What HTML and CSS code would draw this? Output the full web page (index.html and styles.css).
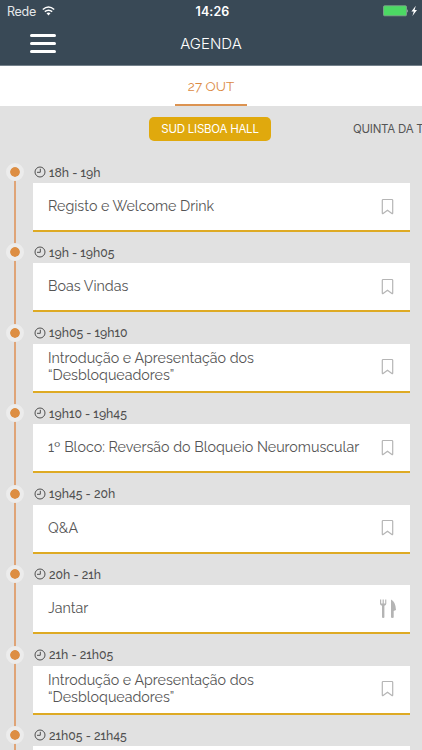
FILE: index.html
```html
<!DOCTYPE html>
<html lang="pt">
<head>
  <meta charset="UTF-8">
  <meta name="viewport" content="width=device-width, initial-scale=1.0">
  <title>Agenda</title>
  <link rel="stylesheet" href="styles.css">
</head>
<body>
  <!-- Shared icons -->
  <svg class="sprite" aria-hidden="true">
    <symbol id="clock" viewBox="0 0 12 12">
      <circle cx="6" cy="6" r="5" fill="none" stroke="currentColor" stroke-width="1"/>
      <path d="M6.3 2.8V6.3H3" fill="none" stroke="currentColor" stroke-width="1"/>
    </symbol>
    <symbol id="bookmark" viewBox="0 0 14 18">
      <path d="M2.1 1.5h8.8q.8 0 .8.8v12.8q0 1-.8.4L6.5 12.2l-4.4 3.3q-.8.6-.8-.4V2.3q0-.8.8-.8z" fill="none" stroke="currentColor" stroke-width="1.2"/>
    </symbol>
    <symbol id="meal" viewBox="0 0 18 20">
      <path d="M1 .5v4.2q0 1.6 2 2V18.2q0 .8 1.2.8t1.2-.8V6.7q1.9-.4 1.9-2V.5H6.2v4H4.8v-4H3.6v4H2.2v-4zM12 .4q4.6 2 5 10.6l-2.3 1v6.2q0 .8-1.3.8T12 18.2z" fill="currentColor"/>
    </symbol>
  </svg>

  <header class="header">
    <div class="status">
      <div class="carrier">
        <span>Rede</span>
        <svg class="wifi" viewBox="0 0 13 10">
          <path d="M.8 3.5Q6.5-1.4 12.2 3.5M2.8 5.7q3.7-3 7.4 0" fill="none" stroke="#fff" stroke-width="1.5"/>
          <path d="M4.5 7.3q2-1.4 4 0l-2 2.2z" fill="#fff"/>
        </svg>
      </div>
      <span class="time">14:26</span>
      <div class="power">
        <svg viewBox="0 0 35 12">
          <rect x=".5" y=".8" width="23" height="10" rx="1" fill="#4cd964" stroke="#85a491" stroke-width=".8"/>
          <path d="M24.2 4q1.8 1.9 0 3.8z" fill="#a9c3b2"/>
          <path d="M32.8.7 28.4 6.4h2.4l-1.4 4.6 4.6-6.1h-2.4z" fill="#fff"/>
        </svg>
      </div>
    </div>
    <div class="navbar">
      <div class="menu"><i></i><i></i><i></i></div>
      <h1>AGENDA</h1>
    </div>
  </header>

  <nav class="days">
    <span class="day">27 OUT</span>
  </nav>

  <div class="rooms">
    <span class="room active">SUD LISBOA HALL</span>
    <span class="room next">QUINTA DA T</span>
  </div>

  <main class="agenda">
    <section class="session">
      <p class="hour"><svg><use href="#clock"/></svg>18h - 19h</p>
      <div class="card"><p>Registo e Welcome Drink</p><svg class="mark"><use href="#bookmark"/></svg></div>
    </section>
    <section class="session">
      <p class="hour"><svg><use href="#clock"/></svg>19h - 19h05</p>
      <div class="card"><p>Boas Vindas</p><svg class="mark"><use href="#bookmark"/></svg></div>
    </section>
    <section class="session">
      <p class="hour"><svg><use href="#clock"/></svg>19h05 - 19h10</p>
      <div class="card"><p>Introdução e Apresentação dos<br>“Desbloqueadores”</p><svg class="mark"><use href="#bookmark"/></svg></div>
    </section>
    <section class="session">
      <p class="hour"><svg><use href="#clock"/></svg>19h10 - 19h45</p>
      <div class="card"><p>1º Bloco: Reversão do Bloqueio Neuromuscular</p><svg class="mark"><use href="#bookmark"/></svg></div>
    </section>
    <section class="session">
      <p class="hour"><svg><use href="#clock"/></svg>19h45 - 20h</p>
      <div class="card"><p>Q&amp;A</p><svg class="mark"><use href="#bookmark"/></svg></div>
    </section>
    <section class="session">
      <p class="hour"><svg><use href="#clock"/></svg>20h - 21h</p>
      <div class="card"><p>Jantar</p><svg class="meal"><use href="#meal"/></svg></div>
    </section>
    <section class="session">
      <p class="hour"><svg><use href="#clock"/></svg>21h - 21h05</p>
      <div class="card"><p>Introdução e Apresentação dos<br>“Desbloqueadores”</p><svg class="mark"><use href="#bookmark"/></svg></div>
    </section>
    <section class="session">
      <p class="hour"><svg><use href="#clock"/></svg>21h05 - 21h45</p>
      <div class="card"></div>
    </section>
  </main>
</body>
</html>
```
FILE: styles.css
```css
*, *::before, *::after {
  box-sizing: border-box;
}

body {
  margin: 0;
  height: 750px;
  overflow: hidden;
  display: flex;
  flex-direction: column;
  background-color: #e1e1e1;
  color: #555;
  font-family: Raleway, Lato, sans-serif;
}

h1, p {
  margin: 0;
  font-weight: normal;
}

svg {
  display: block;
  flex: none;
}

.sprite {
  position: absolute;
  width: 0;
  height: 0;
}

/* Header */
.header {
  flex: none;
  height: 66px;
  background-color: #394956;
  border-bottom: 1px solid #74818b;
  color: #fff;
}

.status {
  display: grid;
  grid-template-columns: 1fr auto 1fr;
  align-items: center;
  height: 22px;
  padding: 0 4px 0 7px;
  font-family: Inter, sans-serif;
  font-size: 12.5px;
}

.carrier {
  display: flex;
  align-items: center;
  gap: 6px;
  color: #e4e7e9;
  letter-spacing: -0.3px;
}

.wifi {
  width: 13px;
  height: 10px;
}

.time {
  font-weight: 600;
  letter-spacing: 0.1px;
}

.power svg {
  width: 35px;
  height: 12px;
  margin-left: auto;
}

.navbar {
  display: grid;
  grid-template-columns: 1fr auto 1fr;
  align-items: center;
  height: 43px;
  padding: 0 30px;
}

.menu {
  display: flex;
  flex-direction: column;
  gap: 5px;
  width: 26px;
  padding-bottom: 1px;
}

.menu i {
  height: 3px;
  border-radius: 2px;
  background-color: #fff;
}

h1 {
  font-family: Inter, sans-serif;
  font-size: 15px;
  font-weight: 300;
}

/* Day and room tabs */
.days {
  flex: none;
  display: flex;
  justify-content: center;
  height: 40px;
  background-color: #fff;
}

.day {
  width: 72px;
  border-bottom: 2px solid #dc9351;
  color: #dc8a42;
  font-size: 13.5px;
  line-height: 40px;
  text-align: center;
}

.rooms {
  flex: none;
  display: flex;
  align-items: center;
  height: 55px;
  padding: 0 0 9px 149px;
  font-family: Inter, sans-serif;
  font-size: 11.5px;
  letter-spacing: -0.25px;
  white-space: nowrap;
}

.room {
  flex: none;
}

.room.active {
  width: 122px;
  height: 24px;
  border-radius: 5px;
  background-color: #e0a90d;
  color: #fff;
  line-height: 24px;
  text-align: center;
}

.room.next {
  margin-left: 82px;
}

/* Timeline */
.agenda {
  flex: 1;
  min-height: 0;
  overflow: hidden;
}

.session {
  position: relative;
  height: 80.45px;
  padding: 0 12.5px 0 33px;
}

.session::before {
  content: "";
  position: absolute;
  left: 14px;
  top: 11px;
  width: 2px;
  height: 81px;
  background-color: #dfa477;
}

.session::after {
  content: "";
  position: absolute;
  left: 6px;
  top: 2px;
  width: 18px;
  height: 18px;
  border: 4px solid #ececec;
  border-radius: 50%;
  background-color: #dd8e43;
  background-clip: padding-box;
  z-index: 1;
}

.hour {
  display: flex;
  align-items: center;
  gap: 3px;
  height: 22px;
  padding-left: 1px;
  color: #505050;
  font-size: 12.25px;
  font-weight: 500;
}

.hour svg {
  width: 12px;
  height: 12px;
}

.card {
  display: flex;
  align-items: center;
  justify-content: space-between;
  height: 49px;
  padding: 0 15px;
  border-bottom: 2px solid #deaa24;
  background-color: #fff;
  font-size: 14.25px;
  line-height: 16.5px;
  white-space: nowrap;
}

.card p {
  padding-bottom: 1px;
}

.mark {
  width: 14px;
  height: 18px;
  color: #b5b5b5;
}

.meal {
  width: 18px;
  height: 20px;
  margin-right: -2px;
  color: #b4b4b4;
}
```
